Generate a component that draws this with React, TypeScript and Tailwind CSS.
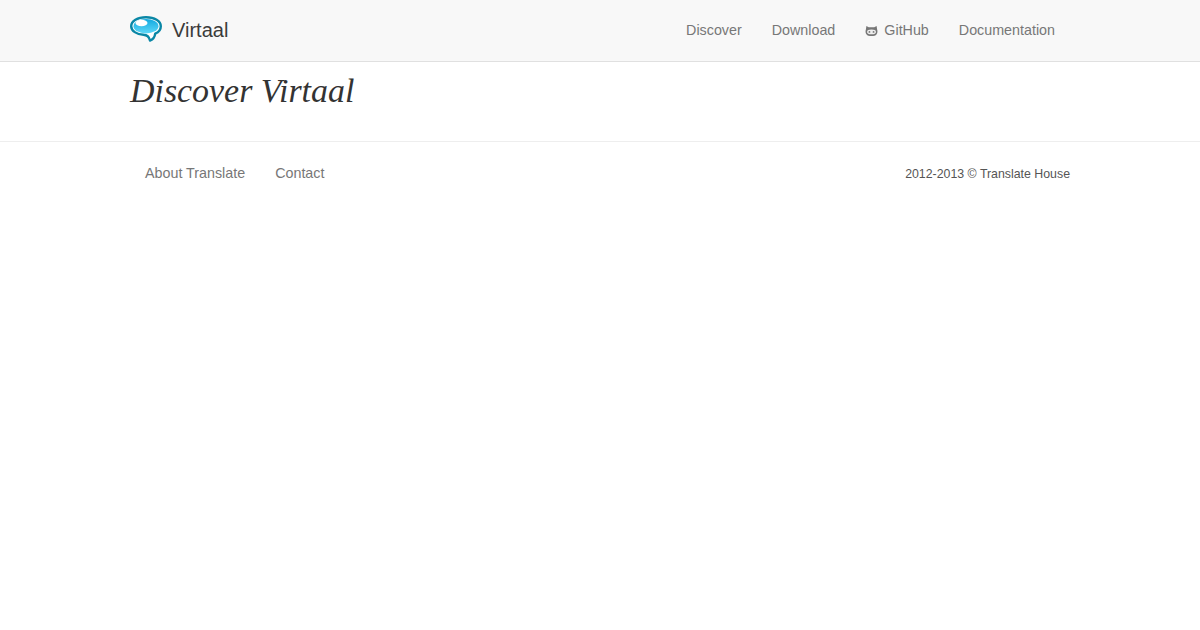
function Logo() {
  return (
    <svg width="32" height="26" viewBox="0 0 32 26" className="block">
      <defs>
        <linearGradient id="bubble" x1="0" y1="0" x2="0" y2="1">
          <stop offset="0" stopColor="#12a9e0" />
          <stop offset="1" stopColor="#5fd8f8" />
        </linearGradient>
      </defs>
      <path d="M16 1.200C7.500 1.200 1.200 5 1.200 10.300c0 4.700 5.300 8 12.300 8.500 3.500.2 5.500 1.500 6.500 5.800 2.700-1 4.800-3.300 5.200-6.900C29 16.200 30.800 13.500 30.800 10.300 30.800 5 24.500 1.200 16 1.200z" fill="#ffffff" stroke="#0a87a6" strokeWidth="2.400" strokeLinejoin="round" />
      <ellipse cx="16" cy="10.200" rx="12.500" ry="7.300" fill="url(#bubble)" />
      <ellipse cx="11.500" cy="7" rx="6" ry="3.200" fill="#ffffff" />
    </svg>
  );
}

function OctoCat() {
  return (
    <svg width="13" height="12" viewBox="0 0 14 12" className="block">
      <path d="M1.500 0.500 4 2h6L12.500 0.500 13 4c.7 2 .5 4-.5 5.500C11.500 11 9.500 11.500 7 11.500S2.500 11 1.500 9.500C.5 8 .3 6 1 4z" fill="#777777" />
      <ellipse cx="7" cy="7" rx="4.800" ry="2.500" fill="#eeeeee" />
      <circle cx="4.800" cy="7" r="1" fill="#777777" />
      <circle cx="9.200" cy="7" r="1" fill="#777777" />
    </svg>
  );
}

export default function App() {
  return (
    <div className="min-h-[630px] bg-white font-['Liberation_Sans',sans-serif] text-[#333333]">
      {/* Navbar */}
      <nav className="h-[62px] bg-[#f8f8f8] border-b border-[#e0e0e0]">
        <div className="w-[940px] mx-auto h-full flex items-center justify-between pb-[2px]">
          <a className="flex items-center gap-[10px]">
            <span className="-mt-[2px]">
              <Logo />
            </span>
            <span className="text-xl text-[#3b3b3b]">Virtaal</span>
          </a>
          <ul className="flex items-center mt-[2px] text-[14.300px] text-[#777777]">
            <li className="px-[15px]">Discover</li>
            <li className="px-[15px]">Download</li>
            <li className="px-[15px] flex items-center gap-[6px]">
              <OctoCat />
              GitHub
            </li>
            <li className="px-[15px]">Documentation</li>
          </ul>
        </div>
      </nav>

      {/* Page heading */}
      <div className="h-[80px] border-b border-[#eeeeee]">
        <div className="w-[940px] mx-auto">
          <h1 className="font-['Liberation_Serif',serif] italic text-[33.900px] leading-[58px] text-[#333333]">
            Discover Virtaal
          </h1>
        </div>
      </div>

      {/* Footer */}
      <footer className="w-[940px] mx-auto h-[64px] flex items-center justify-between">
        <ul className="flex items-center text-[14.300px] text-[#777777]">
          <li className="px-[15px]">About Translate</li>
          <li className="px-[15px]">Contact</li>
        </ul>
        <p className="text-[12.350px] text-[#555555]">2012-2013 © Translate House</p>
      </footer>
    </div>
  );
}
